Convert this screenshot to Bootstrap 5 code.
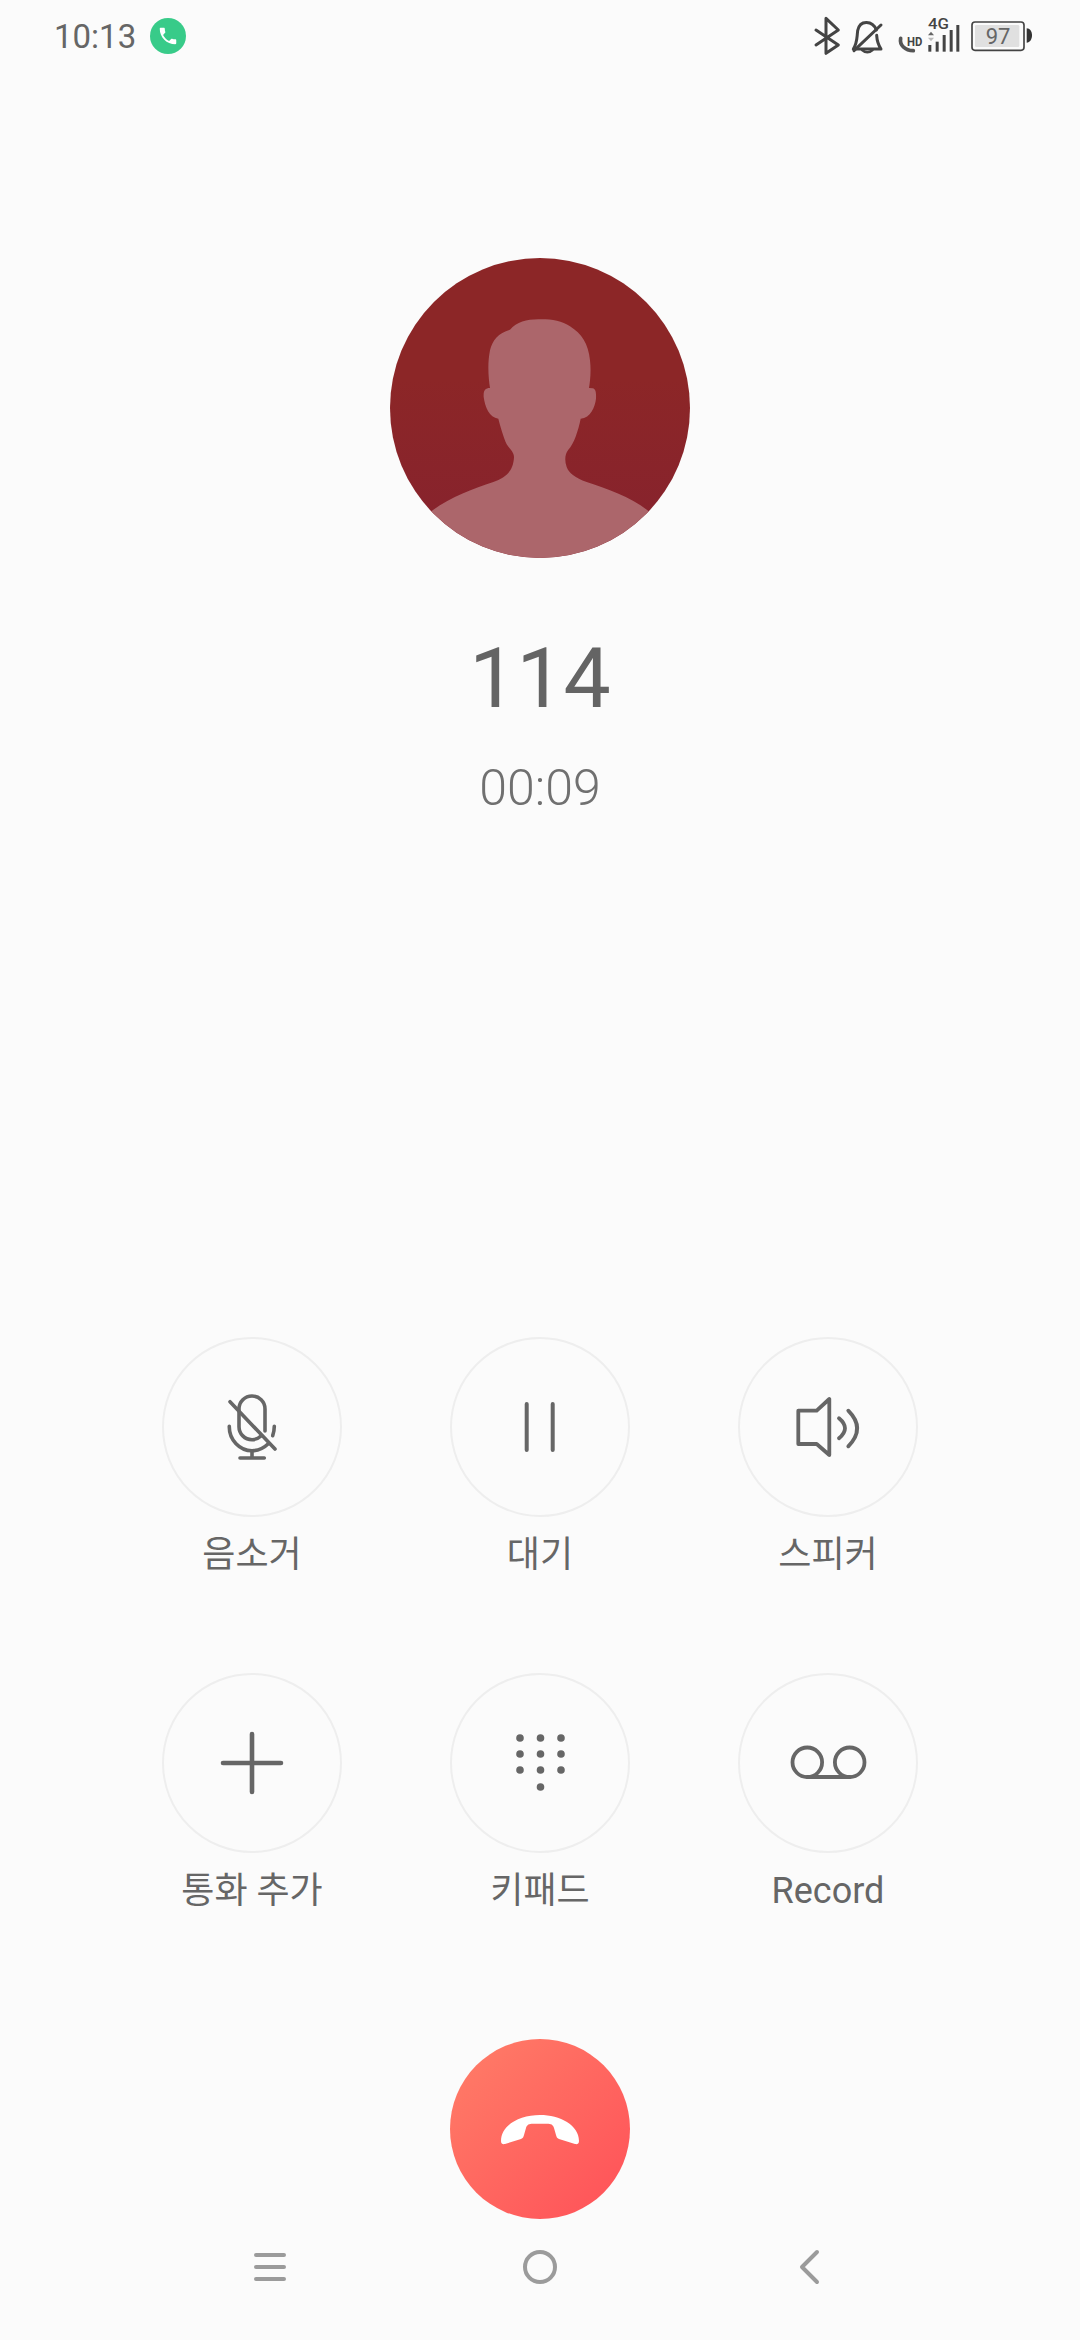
<!DOCTYPE html>
<html lang="ko">
<head>
  <meta charset="UTF-8">
  <title>통화 중</title>
  <link href="https://cdn.jsdelivr.net/npm/bootstrap@5.3.0/dist/css/bootstrap.min.css" rel="stylesheet">
  <style>
    body { background: #fbfbfb; height: 2340px; overflow: hidden; color: #666; font-family: Roboto, "Noto Sans CJK KR", sans-serif; }
    .status-row { height: 74px; }
    .clock-text { font-size: 33px; line-height: 74px; margin-left: 54px; margin-right: 14px; }
    .call-dot { width: 36px; height: 36px; background: #38cb89; margin-top: 18px; }
    .contact-photo { width: 300px; height: 300px; margin-top: 184px; background: linear-gradient(180deg, #8c2627 40%, #86222e); }
    .contact-number { font-size: 84px; line-height: 100px; margin-top: 71px; font-weight: 400; color: #646464; }
    .call-timer { font-size: 50px; line-height: 60px; margin-top: 29px; font-weight: 300; color: #707070; }
    .action-grid { width: 864px; margin-top: 519px; }
    .action-cell { height: 336px; }
    .action-ring { width: 180px; height: 180px; border: 2px solid #eeeeee; }
    .action-ring svg { width: 180px; height: 180px; flex: none; }
    .action-text { font-size: 36px; line-height: 50px; margin-top: 13px; font-weight: 400; }
    .hangup-btn { width: 180px; height: 180px; margin-top: 30px; background: linear-gradient(135deg, #ff7e68, #ff5058); }
    .soft-keys { margin-top: 28px; }
    .soft-key { width: 270px; height: 40px; }
    .ic-line { fill: none; stroke: #666; stroke-linecap: round; stroke-linejoin: round; }
    .ic-nav { fill: none; stroke: #9b9b9b; stroke-width: 4; stroke-linecap: round; stroke-linejoin: round; }
  </style>
</head>
<body>
  <div class="d-flex flex-column align-items-center">

    <!-- status bar -->
    <div class="status-row w-100 d-flex justify-content-between align-items-start">
      <div class="d-flex align-items-start">
        <span class="clock-text">10:13</span>
        <span class="call-dot rounded-circle d-flex align-items-center justify-content-center">
          <svg width="22" height="22" viewBox="0 0 24 24"><path fill="#fff" d="M6.62 10.79c1.44 2.83 3.76 5.14 6.59 6.59l2.2-2.2c.27-.27.67-.36 1.02-.24 1.12.37 2.33.57 3.57.57.55 0 1 .45 1 1V20c0 .55-.45 1-1 1-9.39 0-17-7.61-17-17 0-.55.45-1 1-1h3.5c.55 0 1 .45 1 1 0 1.25.2 2.45.57 3.57.11.35.03.74-.25 1.02l-2.2 2.2z"/></svg>
        </span>
      </div>
      <svg width="300" height="70" viewBox="0 0 900 210">
        <g fill="none" stroke="#444" stroke-width="9" stroke-linejoin="round" stroke-linecap="round">
          <path d="M108 90 L175 135 L138 160 V55 L175 90 L108 135"/>
          <path d="M289 90 C278 62 240 58 233 92 C230 118 232 128 220 147 H303 C293 132 291 122 290 106"/>
          <path d="M303 75 L222 152"/>
          <path d="M246 150 Q262 164 278 150" stroke-width="7"/>
          <path d="M362 115 C358 135 375 152 400 152" stroke="#555" stroke-width="11"/>
        </g>
        <text x="381" y="137" font-family="Roboto" font-weight="700" font-size="37" fill="#444" textLength="46" lengthAdjust="spacingAndGlyphs">HD</text>
        <text x="444" y="88" font-family="Roboto" font-weight="500" font-size="46" fill="#444" textLength="63" lengthAdjust="spacingAndGlyphs">4G</text>
        <path d="M453 95 L462 106 H444Z" fill="#666"/>
        <path d="M453 124 L462 113 H444Z" fill="#bbb"/>
        <g fill="#444">
          <rect x="445" y="135" width="9" height="20"/>
          <rect x="467" y="125" width="9" height="30"/>
          <rect x="488" y="105" width="9" height="50"/>
          <rect x="509" y="90" width="9" height="65"/>
          <rect x="529" y="75" width="9" height="80"/>
        </g>
        <rect x="576" y="66" width="156" height="85" rx="9" fill="none" stroke="#444" stroke-width="5"/>
        <rect x="585" y="75" width="133" height="66" rx="4" fill="#e0e0e0"/>
        <text x="654" y="131" text-anchor="middle" font-family="Roboto" font-size="66" fill="#666">97</text>
        <path d="M740 85 C750 85 756 95 756 106 C756 118 750 128 740 128Z" fill="#333"/>
      </svg>
    </div>

    <!-- contact -->
    <div class="contact-photo rounded-circle overflow-hidden">
      <svg width="300" height="300" viewBox="60 53 900 900" class="d-block">
        <path fill="#ac666b" d="M505 237 C540 236 575 240 600 258 C635 280 655 310 660 360 C664 395 660 425 657 443 L668 444 C677 446 679 455 678 475 C675 500 662 532 632 535 C625 570 612 610 595 628 C585 640 583 660 590 680 C598 700 615 712 650 725 C710 745 785 770 835 812 L835 960 H185 V812 C240 770 310 745 370 725 C405 712 430 695 432 650 C432 635 418 625 410 612 C400 590 390 555 385 535 C358 532 345 500 341 470 C340 450 345 443 360 443 C355 410 352 370 360 330 C367 300 385 278 420 268 C440 245 470 237 505 237Z"/>
      </svg>
    </div>
    <div class="contact-number">114</div>
    <div class="call-timer">00:09</div>

    <!-- call actions -->
    <div class="action-grid row g-0">
      <div class="col-4 action-cell d-flex flex-column align-items-center">
        <div class="action-ring rounded-circle d-flex align-items-center justify-content-center">
          <svg viewBox="0 0 180 180"><g class="ic-line" stroke-width="3.6">
            <path d="M103 94 V72 A13 13 0 0 0 77 72 V89.7 A13 13 0 0 0 90 102.7 Q95 102.7 99 99"/>
            <path d="M67.3 89.3 C67 103 78 113.7 90 113.7 Q99 113.7 106 107"/>
            <path d="M112.3 89.3 Q112.3 94 110.7 98.7"/>
            <path d="M90 113.7 V121 M78 121 H102.3"/>
            <path d="M68 64.7 L113 112"/>
          </g></svg>
        </div>
        <div class="action-text">음소거</div>
      </div>
      <div class="col-4 action-cell d-flex flex-column align-items-center">
        <div class="action-ring rounded-circle d-flex align-items-center justify-content-center">
          <svg viewBox="0 0 180 180"><g class="ic-line" stroke-width="4">
            <path d="M76.7 67 V113 M102.7 67 V113"/>
          </g></svg>
        </div>
        <div class="action-text">대기</div>
      </div>
      <div class="col-4 action-cell d-flex flex-column align-items-center">
        <div class="action-ring rounded-circle d-flex align-items-center justify-content-center">
          <svg viewBox="0 0 180 180"><g class="ic-line" stroke-width="3.8">
            <path d="M60.3 73.7 H78.7 L91.3 62 V118 L78.7 107 H60.3Z"/>
            <path d="M101 81.3 Q113 91.3 101 101.3"/>
            <path d="M110.3 73.7 Q128 91.5 110.3 109.3"/>
          </g></svg>
        </div>
        <div class="action-text">스피커</div>
      </div>
      <div class="col-4 action-cell d-flex flex-column align-items-center">
        <div class="action-ring rounded-circle d-flex align-items-center justify-content-center">
          <svg viewBox="0 0 180 180"><g class="ic-line" stroke-width="4.6">
            <path d="M90 61 V119 M61 90 H119"/>
          </g></svg>
        </div>
        <div class="action-text">통화 추가</div>
      </div>
      <div class="col-4 action-cell d-flex flex-column align-items-center">
        <div class="action-ring rounded-circle d-flex align-items-center justify-content-center">
          <svg viewBox="0 0 180 180"><g fill="#666">
            <circle cx="70" cy="65" r="3.8"/><circle cx="90.5" cy="65" r="3.8"/><circle cx="111" cy="65" r="3.8"/>
            <circle cx="70" cy="81" r="3.8"/><circle cx="90.5" cy="81" r="3.8"/><circle cx="111" cy="81" r="3.8"/>
            <circle cx="70" cy="97" r="3.8"/><circle cx="90.5" cy="97" r="3.8"/><circle cx="111" cy="97" r="3.8"/>
            <circle cx="90.5" cy="114" r="3.8"/>
          </g></svg>
        </div>
        <div class="action-text">키패드</div>
      </div>
      <div class="col-4 action-cell d-flex flex-column align-items-center">
        <div class="action-ring rounded-circle d-flex align-items-center justify-content-center">
          <svg viewBox="0 0 180 180"><g class="ic-line" stroke-width="3.8">
            <circle cx="69.3" cy="89.3" r="14.8"/><circle cx="111.7" cy="89.3" r="14.8"/>
            <path d="M69.3 104 H111.7"/>
          </g></svg>
        </div>
        <div class="action-text">Record</div>
      </div>
    </div>

    <!-- hang up -->
    <div class="hangup-btn rounded-circle">
      <svg width="180" height="180" viewBox="0 0 180 180" class="d-block">
        <path fill="#fff" d="M90 76 C70 76 51 86 51 102 C51 105 53 105.5 55 105 L71 100 C73 99 73.5 98 74 96 L76 89 C77 85.5 79 84.7 83 84.7 H97 C101 84.7 103 85.5 104 89 L106 96 C106.5 98 107 99 109 100 L125 105 C127 105.5 129 105 129 102 C129 86 110 76 90 76Z"/>
      </svg>
    </div>

    <!-- navigation keys -->
    <div class="soft-keys d-flex justify-content-center">
      <div class="soft-key d-flex justify-content-center">
        <svg width="40" height="40" viewBox="0 0 40 40"><path class="ic-nav" d="M6 8 H34 M6 20 H34 M6 32 H34"/></svg>
      </div>
      <div class="soft-key d-flex justify-content-center">
        <svg width="40" height="40" viewBox="0 0 40 40"><circle class="ic-nav" cx="20" cy="20" r="15"/></svg>
      </div>
      <div class="soft-key d-flex justify-content-center">
        <svg width="40" height="40" viewBox="0 0 40 40"><path class="ic-nav" d="M27 5 L12 20 L27 35"/></svg>
      </div>
    </div>

  </div>
  <script src="https://cdn.jsdelivr.net/npm/bootstrap@5.3.0/dist/js/bootstrap.bundle.min.js"></script>
</body>
</html>
